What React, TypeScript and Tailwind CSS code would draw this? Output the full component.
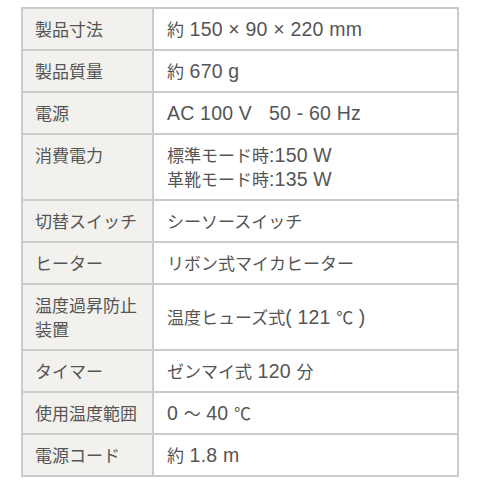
import React from 'react';

const rows: { label: string[]; value: string[] }[] = [
  { label: ['製品寸法'], value: ['約 150 × 90 × 220 mm'] },
  { label: ['製品質量'], value: ['約 670 g'] },
  { label: ['電源'], value: ['AC 100 V\u00a0\u00a0 50 - 60 Hz'] },
  { label: ['消費電力'], value: ['標準モード時:150 W', '革靴モード時:135 W'] },
  { label: ['切替スイッチ'], value: ['シーソースイッチ'] },
  { label: ['ヒーター'], value: ['リボン式マイカヒーター'] },
  { label: ['温度過昇防止', '装置'], value: ['温度ヒューズ式( 121 ℃ )'] },
  { label: ['タイマー'], value: ['ゼンマイ式 120 分'] },
  { label: ['使用温度範囲'], value: ['0 〜 40 ℃'] },
  { label: ['電源コード'], value: ['約 1.8 m'] },
];

// Latin runs are set a bit larger, like the Hiragino Latin in the shot
function Mixed({ text }: { text: string }) {
  const parts = text.split(/([\x20-\x7e\u00a0×]+)/).filter(Boolean);
  return (
    <>
      {parts.map((p, i) =>
        /^[\x20-\x7e\u00a0×]+$/.test(p) ? (
          <span
            key={i}
            className="text-[19.5px] tracking-[0.2px]"
            style={{ fontFamily: '"Liberation Sans", sans-serif' }}
          >
            {p}
          </span>
        ) : (
          <span key={i}>{p}</span>
        )
      )}
    </>
  );
}

export default function App() {
  return (
    <div
      className="w-[480px] h-[480px] bg-white pt-[7px] pl-[21px] text-[#555] text-[17px] leading-[24px]"
      style={{ fontFamily: '"Noto Sans CJK JP", sans-serif' }}
    >
      <table className="w-[438px] border-collapse border-2 border-[#cbcbcb]">
        <tbody>
          {rows.map((r, i) => (
            <tr key={i}>
              <td className="w-[131px] border-2 border-[#cbcbcb] bg-[#f2f1ee] pl-[12px] py-[8px] align-top">
                {r.label.map((l, j) => (
                  <div key={j} className="h-[24px]">{l}</div>
                ))}
              </td>
              <td className="border-2 border-[#cbcbcb] bg-white pl-[13px] py-[8px] align-middle">
                {r.value.map((v, j) => (
                  <div key={j} className="h-[24px] whitespace-pre">
                    <Mixed text={v} />
                  </div>
                ))}
              </td>
            </tr>
          ))}
        </tbody>
      </table>
    </div>
  );
}
